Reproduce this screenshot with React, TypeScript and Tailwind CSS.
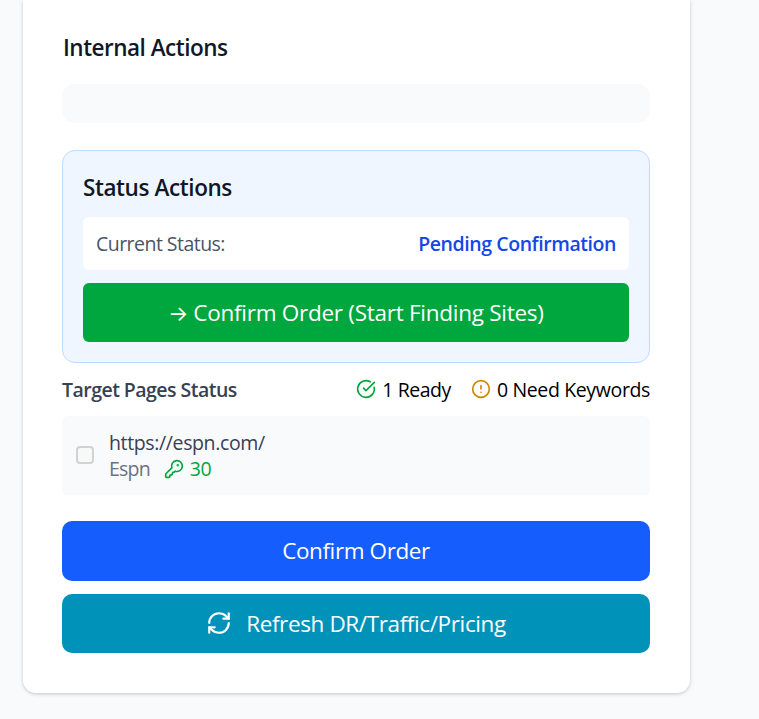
import { RefreshCw, CircleCheckBig, CircleAlert, KeyRound } from "lucide-react";

export default function App() {
  return (
    <div className="h-[719px] w-[759px] overflow-hidden bg-gray-50 pl-[23px] font-['Open_Sans','Noto_Sans',sans-serif]">
      <section className="h-[693px] w-[667px] rounded-b-[13px] bg-white px-[39px] pt-[31px] shadow-[0_1px_5px_rgba(0,0,0,0.1),0_1px_3px_rgba(0,0,0,0.12)]">
        <h2 className="h-[33px] pl-px text-[22.5px] leading-[33px] font-semibold tracking-[-0.5px] whitespace-nowrap text-gray-900">
          <span>Internal Actions</span>
        </h2>
        <div className="mt-[20px] h-[39px] w-[588px] rounded-[13px] bg-gray-50" />

        <div className="mt-[27px] h-[213px] w-[588px] rounded-[13px] border border-blue-200 bg-blue-50 px-5 pt-5">
          <h3 className="h-[33px] text-[22.5px] leading-[33px] font-semibold tracking-[-0.4px] whitespace-nowrap text-gray-900">
            <span>Status Actions</span>
          </h3>
          <div className="mt-[13px] flex h-[53px] items-center justify-between rounded-[6px] bg-white px-[13px] text-[19.5px]">
            <span className="tracking-[-0.53px] text-gray-600">Current Status:</span>
            <span className="font-semibold tracking-[-0.43px] text-blue-700">Pending Confirmation</span>
          </div>
          <button className="mt-[13px] flex h-[59px] w-full items-center justify-center rounded-[6px] bg-green-600 text-[22.5px] whitespace-nowrap text-white">
            <span className="mt-[3px] mr-[5px] font-['Inter'] text-[21px] font-normal">→</span>
            <span className="tracking-[-0.27px]">Confirm Order (Start Finding Sites)</span>
          </button>
        </div>

        <div className="mt-[13px] flex h-[28px] w-[588px] items-center justify-between text-[19.5px] whitespace-nowrap">
          <span className="font-semibold tracking-[-0.53px] text-gray-700">Target Pages Status</span>
          <div className="flex items-center gap-[20px] text-black">
            <span className="flex items-center gap-[6px]">
              <CircleCheckBig size={20} className="mb-[2px] text-green-600" />
              <span className="tracking-[-0.45px]">1 Ready</span>
            </span>
            <span className="flex items-center gap-[6px]">
              <CircleAlert size={20} className="mb-[2px] text-yellow-600" />
              <span className="tracking-[-0.36px]">0 Need Keywords</span>
            </span>
          </div>
        </div>

        <div className="mt-[12px] flex h-[79px] w-[588px] items-center rounded-[6px] bg-gray-50 pl-[14px]">
          <span className="mb-px size-[18px] rounded-[4px] border-2 border-[#d0d2d3] bg-[#f7f8f8]" />
          <div className="ml-[15px] text-[19.5px] leading-[26px] whitespace-nowrap">
            <div className="tracking-[-0.37px] text-gray-700"><span>https://espn.com/</span></div>
            <div className="flex items-center">
              <span className="tracking-[-0.8px] text-gray-500">Espn</span>
              <span className="ml-[14px] flex items-center gap-[6px] text-green-600">
                <KeyRound size={20} />
                <span className="tracking-[-0.5px]">30</span>
              </span>
            </div>
          </div>
        </div>

        <button className="mt-[26px] flex h-[60px] w-[588px] items-center justify-center rounded-[10px] bg-blue-600 text-[22.5px] text-white">
          <span className="tracking-[-0.4px]">Confirm Order</span>
        </button>
        <button className="mt-[13px] flex h-[59px] w-[588px] items-center justify-center gap-[14px] rounded-[10px] bg-[#0092b8] text-[22.5px] text-white">
          <RefreshCw size={26} className="mb-px" />
          <span className="tracking-[-0.38px]">Refresh DR/Traffic/Pricing</span>
        </button>
      </section>
    </div>
  );
}
